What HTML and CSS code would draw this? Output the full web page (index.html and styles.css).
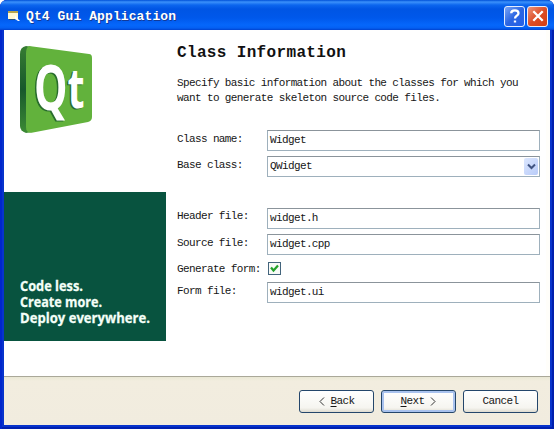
FILE: index.html
```html
<!DOCTYPE html>
<html lang="en">
<head>
<meta charset="utf-8">
<title>Qt4 Gui Application</title>
<link rel="stylesheet" href="styles.css">
</head>
<body>
<div class="window">
  <header class="titlebar">
    <svg class="app-icon" width="13" height="13" viewBox="0 0 13 13">
      <path d="M0 1h10v8H0z" fill="#fff8d4"/><path d="M0 1h10v2H0z" fill="#b4a44c"/>
      <path d="M7 6l5 5-2 0-3-2z" fill="#fff"/><path d="M1 9h6v1H1z" fill="#26517a"/>
    </svg>
    <h1 class="caption">Qt4 Gui Application</h1>
    <button class="sysbtn help" aria-label="Help"><svg width="18" height="18" viewBox="0 0 18 18"><path d="M5.2 6.2C5.2 2.5 12.5 2.5 12.5 6.2C12.5 8.6 9 8.8 9 11.6M9 13.4V15.6" fill="none" stroke="#fff" stroke-width="2.3"/></svg></button>
    <button class="sysbtn close" aria-label="Close"><svg width="18" height="18" viewBox="0 0 18 18"><path d="M4.3 4.3l9.4 9.4M13.7 4.3l-9.4 9.4" stroke="#fff" stroke-width="2.3"/></svg></button>
  </header>
  <main class="content">
    <aside class="side">
      <svg class="logo" width="74" height="88" viewBox="0 0 74 88">
        <defs><linearGradient id="edge" x2="0" y2="1"><stop stop-color="#367d32"/><stop offset=".5" stop-color="#17582c"/><stop offset="1" stop-color="#3c8a35"/></linearGradient></defs>
        <path d="M6 0Q0 1 0 8V80Q0 85 6 87L12 86V1Z" fill="url(#edge)"/>
        <path d="M9 0L69 8Q72 8 72 12V71Q72 75 68 76L13 86.500Q6 88 6 81V8Q6 1 9 0Z" fill="#62b23c"/>
        <g class="letters">
          <text transform="translate(14 63.500) scale(.67 1)" font-size="63">Q</text>
          <text transform="translate(47.500 61.500) scale(.7 1)" font-size="56">t</text>
        </g>
      </svg>
      <div class="banner">
        <svg class="slogan" width="140" height="54" viewBox="0 0 140 54">
          <text x="0" y="15.500" textLength="63" lengthAdjust="spacingAndGlyphs">Code less.</text>
          <text x="0" y="31.500" textLength="82" lengthAdjust="spacingAndGlyphs">Create more.</text>
          <text x="0" y="47.500" textLength="130" lengthAdjust="spacingAndGlyphs">Deploy everywhere.</text>
        </svg>
      </div>
    </aside>
    <section class="page">
      <h2>Class Information</h2>
      <p>Specify basic information about the classes for which you<br>want to generate skeleton source code files.</p>
      <div class="form">
        <label>Class name:</label><div class="field">Widget</div>
        <label>Base class:</label><div class="field combo">QWidget<span class="arrow"><svg width="9" height="7" viewBox="0 0 9 7"><path d="M1 1.500l3.500 3.500L8 1.500" fill="none" stroke="#405482" stroke-width="2"/></svg></span></div>
        <label class="group">Header file:</label><div class="field group">widget.h</div>
        <label>Source file:</label><div class="field">widget.cpp</div>
        <label class="check-label">Generate form:</label><div class="check"><svg width="9" height="9" viewBox="0 0 9 9"><path d="M1 3.500l2.500 3L8 1.500" fill="none" stroke="#22a12a" stroke-width="2.200"/></svg></div>
        <label>Form file:</label><div class="field">widget.ui</div>
      </div>
    </section>
  </main>
  <footer class="actions">
    <button class="btn"><svg class="chev" width="6" height="9" viewBox="0 0 6 9"><path d="M5 .5L1 4.500l4 4"/></svg><span><u>B</u>ack</span></button>
    <button class="btn default"><span><u>N</u>ext</span><svg class="chev" width="6" height="9" viewBox="0 0 6 9"><path d="M1 .5l4 4-4 4"/></svg></button>
    <button class="btn">Cancel</button>
  </footer>
</div>
</body>
</html>
```
FILE: styles.css
```css
* { box-sizing: border-box; }
body { margin: 0; background: #fff; font: 11px/15px "Liberation Mono", monospace; letter-spacing: -.62px; color: #161616; overflow: hidden; }
.window { width: 554px; height: 429px; display: flex; flex-direction: column; background: #0733cc; border-radius: 7px 7px 0 0; overflow: hidden; padding: 0 4px 4px; box-shadow: inset 2px 0 #0026cc, inset -2px 0 #001fae, inset 0 -2px #0020b0; }
.titlebar { height: 30px; flex: none; margin: 0 -4px; padding: 3px 6px 0 8px; display: flex; align-items: center; background: linear-gradient(#0050d8 0, #3b91fb 2px, #0c66ee 5px, #0055e4 9px, #0058eb 18px, #0567fb 25px, #0460f3 28px, #0042cf 30px); }
.caption { flex: 1; margin: 1px 0 0 5px; font-size: 13px; line-height: 18px; font-weight: 700; letter-spacing: .1px; color: #fff; text-shadow: 1px 1px #123a98; }
.sysbtn { width: 21px; height: 21px; margin: 0 0 1px 2px; padding: 0; display: grid; place-items: center; border: 1px solid #e3ecff; border-radius: 3px; }
.help { background: linear-gradient(135deg, #7aa5f6, #2b65e2 50%, #2460e8); }
.close { background: linear-gradient(135deg, #ee9479, #dc4d27 50%, #d43e12); }
.content { height: 346px; flex: none; display: flex; background: #fff; border-right: 4px solid #fffefa; }
.side { width: 162px; flex: none; display: flex; flex-direction: column; justify-content: space-between; padding: 16px 0 35px; }
.logo { margin-left: 16px; }
.letters { font-family: "Open Sans", sans-serif; font-weight: 700; letter-spacing: 0; fill: #fff; text-shadow: -2px 1px #286c2d; }
.slogan { font: 700 15px "Open Sans", sans-serif; letter-spacing: 0; fill: #f4fff8; stroke: #f4fff8; stroke-width: .3px; }
.banner { height: 149px; padding: 83px 0 0 16px; background: #08533f; }
.banner svg { display: block; }
.page { width: 372px; flex: none; margin-left: 11px; padding-top: 13px; }
.page h2 { margin: 0; font-size: 16px; line-height: 20px; letter-spacing: .35px; color: #111; }
.page p { margin: 13px 0 24px; white-space: nowrap; }
.form { display: grid; grid-template-columns: 90px 273px; grid-template-rows: 21px 21px 47px 21px 17px 21px; row-gap: 5px; }
.form label { align-self: center; margin-top: -3px; white-space: nowrap; }
.form .group { align-self: end; }
.form label.group { margin-bottom: 5px; }
.form .check-label { margin-top: 1px; }
.field { height: 21px; padding: 2px 2px; border: 1px solid #9eb0bc; border-top-color: #8b949b; background: #fff; }
.combo { display: flex; justify-content: space-between; padding: 2px 1px 1px 2px; }
.arrow { width: 14px; height: 17px; margin-top: -1px; display: grid; place-items: center; background: linear-gradient(135deg, #dce7ff, #b8cbf8); border-radius: 2px; }
.check { width: 13px; height: 13px; margin: 2px 1px; display: grid; place-items: center; border: 1px solid #43647c; background: #f8faf7; }
.actions { height: 49px; flex: none; display: flex; justify-content: flex-end; align-items: flex-start; gap: 7px; padding: 13px 12px 0 0; border-top: 1px solid #aaa899; background: linear-gradient(#e9e7d4, #f2eddf 4px, #f1ecdf); }
.btn { width: 75px; height: 23px; padding: 0; display: flex; align-items: center; justify-content: center; gap: 6px; border: 1px solid #24466b; border-radius: 3px; background: linear-gradient(#fff, #f6f5f0 80%, #dedbd0); color: #161616; font: inherit; letter-spacing: inherit; }
.btn.default { box-shadow: inset 0 0 0 2px #a9c2ee; }
.chev path { fill: none; stroke: #333; }
u { text-underline-offset: 2px; }
```
